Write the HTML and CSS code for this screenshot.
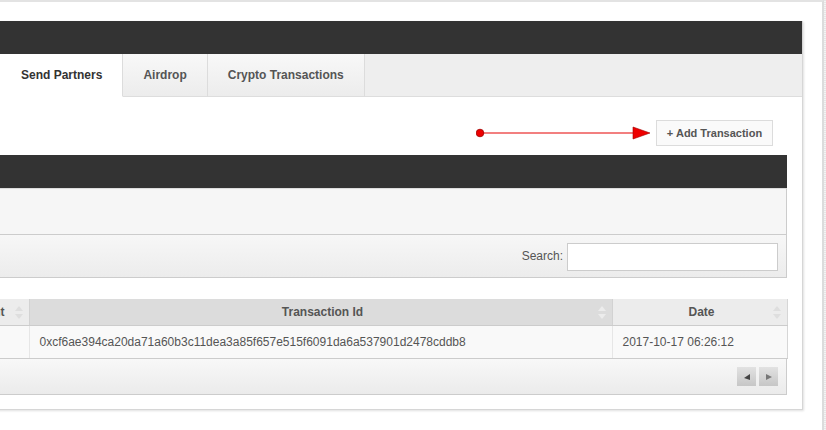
FILE: index.html
```html
<!DOCTYPE html>
<html>
<head>
<meta charset="utf-8">
<link rel="stylesheet" href="styles.css">
</head>
<body>
<div class="viewport">
  <div class="outer">
    <div class="panel">
      <div class="panel-head"></div>
      <ul class="tabs">
        <li class="tab tab-hidden">Partners</li>
        <li class="tab active">Send Partners</li>
        <li class="tab">Airdrop</li>
        <li class="tab">Crypto Transactions</li>
      </ul>
      <div class="content">
        <div class="actions">
          <button class="btn">+ Add Transaction</button>
        </div>
        <div class="inner">
          <div class="inner-head"></div>
          <div class="inner-body"></div>
          <div class="toolbar">
            <label class="search">Search: <input type="text" class="search-input"></label>
          </div>
          <div class="gap"></div>
          <table class="grid">
            <colgroup>
              <col class="c1">
              <col class="c2">
              <col class="c3">
            </colgroup>
            <thead>
              <tr>
                <th class="th-amount"><div class="th-in th-right"><span class="th-text">Amount</span><svg class="sort" width="8" height="15" viewBox="0 0 8 15"><polygon points="0,6 4,1 8,6"/><polygon points="0,9 8,9 4,14"/></svg></div></th>
                <th class="th-sorted"><div class="th-in"><span></span><span class="th-text">Transaction Id</span><svg class="sort" width="8" height="15" viewBox="0 0 8 15"><polygon points="0,6 4,1 8,6"/><polygon points="0,9 8,9 4,14"/></svg></div></th>
                <th><div class="th-in"><span></span><span class="th-text">Date</span><svg class="sort" width="8" height="15" viewBox="0 0 8 15"><polygon points="0,6 4,1 8,6"/><polygon points="0,9 8,9 4,14"/></svg></div></th>
              </tr>
            </thead>
            <tbody>
              <tr>
                <td>1000</td>
                <td class="td-hash">0xcf6ae394ca20da71a60b3c11dea3a85f657e515f6091da6a537901d2478cddb8</td>
                <td>2017-10-17 06:26:12</td>
              </tr>
            </tbody>
          </table>
          <div class="footer">
            <span class="pg pg-prev"><svg width="8" height="8" viewBox="0 0 8 8"><polygon points="7,1 7,7 1,5"/></svg></span>
            <span class="pg pg-next"><svg width="8" height="8" viewBox="0 0 8 8"><polygon points="1,1 7,4 1,7"/></svg></span>
          </div>
        </div>
      </div>
    </div>
  </div>
  <svg class="annot" width="180" height="16" viewBox="0 0 180 16">
    <line x1="7" y1="7" x2="160" y2="7" stroke="#e60000" stroke-width="1.2"/>
    <circle cx="4" cy="7" r="3.8" fill="#ee0000" stroke="#a00000" stroke-width="0.8"/>
    <polygon points="157,1 174,7 157,13" fill="#ee0000" stroke="#a00000" stroke-width="0.6"/>
  </svg>
</div>
</body>
</html>
```

FILE: styles.css
```css
html, body {
  margin: 0;
  padding: 0;
}
body {
  background: #ececec;
  font-family: "Liberation Sans", Arial, sans-serif;
  font-size: 12px;
  color: #555;
}
.viewport {
  width: 826px;
  height: 430px;
  overflow: hidden;
  position: relative;
  background: repeating-linear-gradient(0deg, #f4f4f4 0 1px, #e6e6e6 1px 2px);
}
.outer {
  margin-left: -170px;
  width: 994px;
  box-sizing: border-box;
  height: 440px;
  background: #fff;
  border-top: 2px solid #e3e3e3;
  border-right: 2px solid #dcdcdc;
  padding: 19px 20px 0 20px;
}
.panel {
  width: 952px;
  background: #fff;
  border-right: 1px solid #d6d6d6;
  border-bottom: 1px solid #d6d6d6;
  box-shadow: 1px 1px 2px rgba(0,0,0,0.12);
}
.panel-head {
  height: 33px;
  background: #333;
}
.tabs {
  list-style: none;
  margin: 0;
  padding: 0;
  display: flex;
  height: 42px;
  background: #eee;
  border-bottom: 1px solid #ddd;
}
.tab {
  box-sizing: border-box;
  height: 43px;
  padding: 0 20px;
  display: flex;
  align-items: center;
  font-weight: bold;
  font-size: 12px;
  color: #555;
  background: linear-gradient(#f8f8f8, #ececec);
  border-right: 1px solid #dcdcdc;
  border-bottom: 1px solid #ddd;
}
.tab-hidden {
  width: 150px;
  color: transparent;
}
.tab.active {
  background: #fff;
  color: #333;
  border-left: 1px solid #e4e4e4;
  border-bottom: 1px solid #fff;
  padding: 0 20px 0 21px;
  margin-left: -1px;
}
.content {
  padding: 23px 15px 14px 15px;
}
.actions {
  display: flex;
  justify-content: flex-end;
  margin-bottom: 9px;
}
.btn {
  box-sizing: border-box;
  width: 117px;
  height: 26px;
  margin-right: 14px;
  padding: 0;
  background: #fafafa;
  border: 1px solid #dcdcdc;
  font-family: "Liberation Sans", Arial, sans-serif;
  font-weight: bold;
  font-size: 11px;
  color: #555;
}
.inner {
  width: 922px;
}
.inner-head {
  height: 33px;
  background: #333;
}
.inner-body {
  height: 45px;
  background: #f6f6f6;
  border-top: 1px solid #dcdcdc;
  border-right: 1px solid #ccc;
}
.toolbar {
  box-sizing: border-box;
  height: 44px;
  border-top: 1px solid #ccc;
  border-bottom: 1px solid #ccc;
  border-right: 1px solid #ccc;
  background: linear-gradient(#f7f7f7, #ececec);
  display: flex;
  align-items: center;
  justify-content: flex-end;
  padding-right: 8px;
}
.search {
  display: flex;
  align-items: center;
  gap: 4px;
  color: #555;
  font-size: 12px;
}
.search-input {
  box-sizing: border-box;
  width: 211px;
  height: 28px;
  border: 1px solid #ccc;
  background: #fff;
  margin: 1px 0 0 0;
}
.gap {
  height: 21px;
}
.grid {
  width: 922px;
  table-layout: fixed;
  border-collapse: collapse;
}
.c1 { width: 164px; }
.c2 { width: 583px; }
.c3 { width: 175px; }
.grid th {
  height: 26px;
  padding: 0 6px 0 10px;
  background: #ececec;
  border-right: 1px solid #d2d2d2;
  border-bottom: 1px solid #ccc;
  font-weight: bold;
  font-size: 12px;
  color: #555;
}
.grid th:last-child {
  border-right: 1px solid #d6d6d6;
}
.grid th.th-sorted {
  background: #dcdcdc;
}
.th-in {
  display: grid;
  grid-template-columns: 1fr auto 1fr;
  align-items: center;
}
.th-in .sort {
  justify-self: end;
}
.th-in.th-right {
  grid-template-columns: 1fr auto;
  column-gap: 10px;
}
.th-right .th-text {
  justify-self: end;
}
.sort polygon {
  fill: #dedede;
}
.th-sorted .sort polygon {
  fill: #ececec;
}
.grid td {
  height: 32px;
  padding: 0 10px;
  background: #f9f9f9;
  border-right: 1px solid #e6e6e6;
  border-bottom: 1px solid #ccc;
  font-size: 12px;
  color: #555;
  white-space: nowrap;
  overflow: hidden;
}
.grid td:last-child {
  border-right: 1px solid #d6d6d6;
}
.footer {
  box-sizing: border-box;
  height: 36px;
  border-right: 1px solid #ccc;
  border-bottom: 1px solid #ccc;
  background: linear-gradient(#f8f8f8, #ebebeb);
  display: flex;
  align-items: center;
  justify-content: flex-end;
  gap: 3px;
  padding-right: 8px;
}
.pg {
  width: 19px;
  height: 19px;
  background: linear-gradient(#e2e2e2, #c6c6c6);
  display: flex;
  align-items: center;
  justify-content: center;
}
.pg-prev polygon { fill: #444; }
.pg-next polygon { fill: #777; }
.annot {
  position: absolute;
  left: 476px;
  top: 126px;
}
```
